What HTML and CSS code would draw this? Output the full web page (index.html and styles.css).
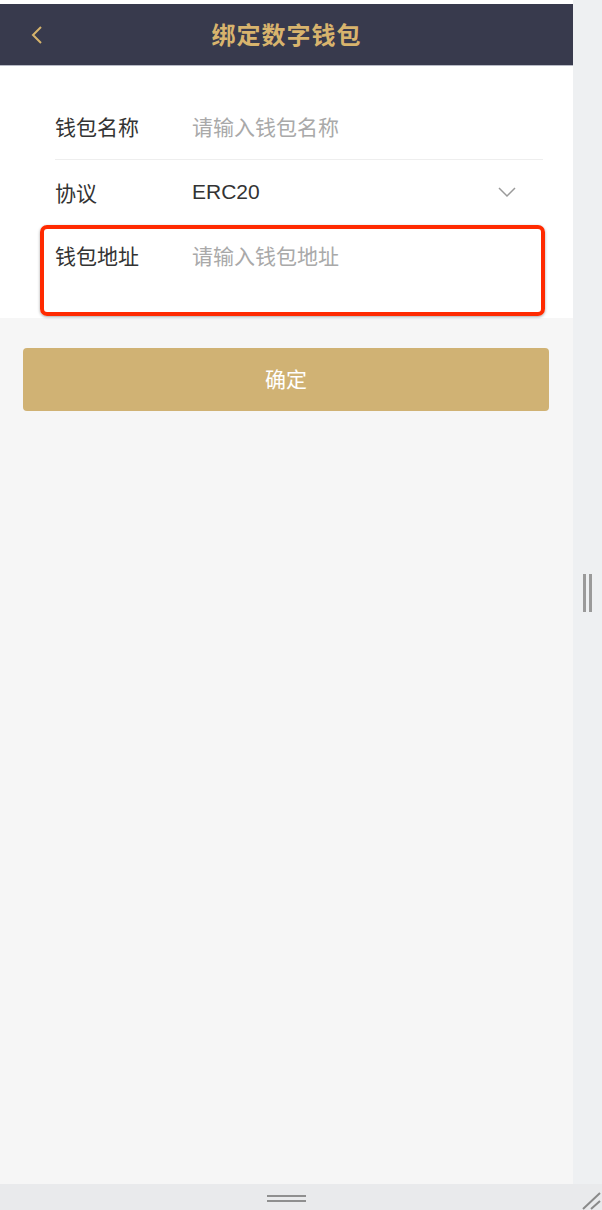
FILE: index.html
```html
<!DOCTYPE html>
<html lang="zh-CN">
<head>
  <meta charset="UTF-8">
  <title>绑定数字钱包</title>
  <meta name="viewport" content="width=device-width, initial-scale=1.0">
  <link rel="stylesheet" href="styles.css">
</head>
<body>
  <div class="window">
    <!-- Page -->
    <div class="page">
      <div class="header">
        <svg class="back" width="14" height="20" viewBox="0 0 14 20">
          <path d="M11 2 L3 10 L11 18" fill="none" stroke="#d6b36c" stroke-width="2"/>
        </svg>
        <h1>绑定数字钱包</h1>
      </div>

      <div class="form">
        <div class="row divided">
          <span class="label">钱包名称</span>
          <span class="placeholder">请输入钱包名称</span>
        </div>
        <div class="row">
          <span class="label">协议</span>
          <span class="value">ERC20</span>
          <svg class="arrow" width="18" height="11" viewBox="0 0 18 11">
            <path d="M1 1 L9 9 L17 1" fill="none" stroke="#9a9a9a" stroke-width="1.5"/>
          </svg>
        </div>
        <div class="row tall">
          <span class="label">钱包地址</span>
          <span class="placeholder">请输入钱包地址</span>
          <!-- annotation box -->
          <div class="highlight"></div>
        </div>
      </div>

      <button class="submit">确定</button>
    </div>

    <!-- Side scroll track -->
    <div class="track">
      <div class="grip-v"><span></span><span></span></div>
    </div>

    <!-- Bottom bar -->
    <div class="bottom">
      <div class="grip-h"><span></span><span></span></div>
    </div>
    <div class="corner">
      <svg width="29" height="26" viewBox="0 0 29 26">
        <path d="M10 25 L27 9 M18 25 L27 17" stroke="#8a8a8a" stroke-width="2"/>
      </svg>
    </div>
  </div>
</body>
</html>
```

FILE: styles.css
```css
/* Basic styling */
html, body {
  margin: 0;
  height: 100%;
}
body {
  font-family: "Liberation Sans", "Noto Sans CJK SC", sans-serif;
  background-color: #fff;
}
.window {
  display: grid;
  grid-template-columns: 1fr 29px;
  grid-template-rows: 1fr 26px;
  height: 1210px;
}
.page {
  background-color: #f6f6f6;
  padding-top: 4px;
  background-image: linear-gradient(#fff, #fff);
  background-size: 100% 4px;
  background-repeat: no-repeat;
}
.header {
  position: relative;
  height: 61px;
  background-color: #383a4d;
  border-bottom: 1px solid #b8bbc6;
  display: flex;
  align-items: center;
  justify-content: center;
}
.header .back {
  position: absolute;
  left: 30px;
  top: 21px;
}
.header h1 {
  margin: 0 0 2px;
  font-size: 24px;
  font-weight: bold;
  color: #d8b46d;
  letter-spacing: 1px;
}
.form {
  background-color: #fff;
  padding-top: 30px;
}
.row {
  position: relative;
  display: flex;
  align-items: center;
  height: 64px;
  margin: 0 30px 0 55px;
  font-size: 21px;
  box-sizing: border-box;
}
.row.divided {
  height: 64px;
  padding-bottom: 3px;
  border-bottom: 1px solid #eeeeee;
}
.row.tall {
  height: 94px;
  align-items: flex-start;
  padding-top: 16px;
}
.label {
  width: 137px;
  color: #333;
  flex-shrink: 0;
}
.placeholder {
  color: #a9a9a9;
}
.value {
  color: #333;
  flex: 1;
}
.arrow {
  margin-right: 27px;
}
.highlight {
  position: absolute;
  left: -15px;
  right: -2px;
  top: 1px;
  bottom: 2px;
  border: 4px solid #ff2a00;
  border-radius: 7px;
  box-shadow: 0 1px 3px rgba(0,0,0,0.35);
}
.submit {
  display: block;
  width: 526px;
  height: 63px;
  margin: 30px 0 0 23px;
  padding-bottom: 4px;
  border: none;
  border-radius: 4px;
  background-color: #d0b274;
  color: #fff;
  font-family: inherit;
  font-size: 21px;
}
.track {
  background-color: #eef0f2;
  display: flex;
  justify-content: center;
  padding-top: 574px;
}
.grip-v {
  display: flex;
  gap: 3px;
  height: 38px;
}
.grip-v span {
  width: 3px;
  background-color: #9a9a9a;
}
.bottom {
  background-color: #e9eaec;
  display: flex;
  justify-content: center;
  padding-top: 11px;
}
.grip-h {
  display: flex;
  flex-direction: column;
  gap: 3px;
  width: 39px;
}
.grip-h span {
  height: 2px;
  background-color: #8f8f8f;
}
.corner {
  background-color: #e9eaec;
}
.corner svg {
  display: block;
}
```
